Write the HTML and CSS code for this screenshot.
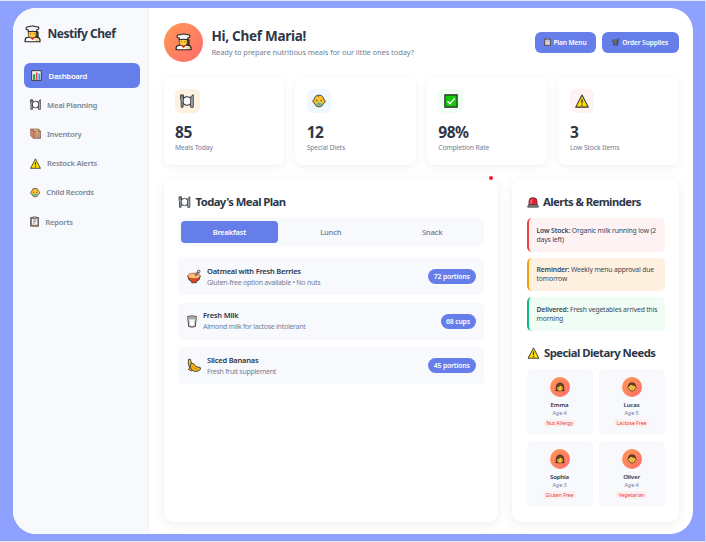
FILE: index.html
```html
<!DOCTYPE html>
<html lang="en">
<head>
<meta charset="utf-8">
<title>Nestify Chef</title>
<link rel="stylesheet" href="styles.css">
</head>
<body>
<svg class="sprite" aria-hidden="true">
  <symbol id="chef" viewBox="0 0 18 18">
    <path d="M12.500 6.500h2.500v6h-3z" fill="#3b3a39" stroke="#3b3a39"/>
    <path d="M1.200 17.200v-2.200q.3-2.200 2.800-2.400l2-.4h6l2 .4q2.600.2 2.900 2.400v2.200z" fill="#fff" stroke="#222" stroke-width="1.300"/>
    <path d="M4.500 5.500h8.500v4.700q-.6 3.200-4.200 3.200t-4.300-3.200z" fill="#ffc83d" stroke="#222" stroke-width=".7"/>
    <path d="M6.500 13h5L9 15.300z" fill="#e81224"/>
    <path d="M4.500 6.500V4.800Q1.700 4.400 2.200 2.500 3 .9 5 1.300 9-.1 13 1.300q2.700-.3 2.800 1.400-.1 1.800-2.300 2.100v1.700q-4.500-1-9 0z" fill="#f5f5f5" stroke="#222" stroke-width="1.100"/>
    <path d="M12.200 14h3v2.500h-3z" fill="#ffc83d"/>
    <path d="M6.500 8.800h1m2.700 0h1" stroke="#6b4a17" stroke-width="1"/>
  </symbol>
  <symbol id="chart" viewBox="0 0 16 16">
    <path d="M1 1h14v14H1z" fill="#f7f7f7" stroke="#333" stroke-width="1.400"/>
    <path d="M3 6h3v8H3z" fill="#16a832"/><path d="M7 3.500h2.500V14H7z" fill="#e84148"/><path d="M10.800 5h2.700v9h-2.700z" fill="#3091e8"/>
  </symbol>
  <symbol id="plate" viewBox="0 0 18 18">
    <circle cx="9" cy="9" r="5.500" fill="#fff" stroke="#333" stroke-width="1.300"/>
    <path d="M.8 1.200h3.600v5.300L3.900 8v9H1.500V8L.8 6.500zM13.800 17V8.500Q13.500 2 17 1v16z" fill="#aebcc8" stroke="#333" stroke-width="1.200"/>
    <path d="M2.600 1v5" stroke="#333" stroke-width=".9"/>
    <path d="M4.500 3.500l2 1.500m7-1.500l-2 1.500m-7 9.500l2-1.500m7 1.500l-2-1.500" stroke="#333"/>
  </symbol>
  <symbol id="box" viewBox="0 0 16 16">
    <path d="M1 1.500h11.500L15.500 5v10H5L1 11.500z" fill="#c69170" stroke="#6b5548" stroke-width="1"/>
    <path d="M1 1.500L5 5v10l-4-3.500z" fill="#d9866f"/><path d="M1 1.500L5 5h10.500M5 5v10" fill="none" stroke="#8c6349"/>
    <path d="M7 1.800L10.500 5v3" fill="none" stroke="#e8c69d" stroke-width="1.500"/>
  </symbol>
  <symbol id="warn" viewBox="0 0 16 16">
    <path d="M8 1.200L15.200 15H.8z" fill="#f9dc08" stroke="#333" stroke-width="1.200" stroke-linejoin="round"/>
    <path d="M8 6v4.700M8 12v1.500" stroke="#333" stroke-width="1.500"/>
  </symbol>
  <symbol id="baby" viewBox="0 0 16 16">
    <path d="M8 1.300q5 .2 5.400 5 1.600.2 1.600 2t-1.700 2Q12 14.800 8 14.800t-5.300-4.500Q1 10 1 8.300t1.600-2Q3 1.500 8 1.300z" fill="#ffc22e" stroke="#444" stroke-width="1.100"/>
    <path d="M7.500 1.500q-1.500 1.500.5 2" fill="none" stroke="#6b4a17" stroke-width=".8"/>
    <circle cx="5.500" cy="7.500" r=".8" fill="#333"/><circle cx="10.500" cy="7.500" r=".8" fill="#333"/>
    <rect x="5.500" y="10" width="5" height="3.200" rx="1.500" fill="#27bfd7"/>
  </symbol>
  <symbol id="clip" viewBox="0 0 14 16">
    <path d="M1 2h12v13H1z" fill="#a38671" stroke="#454040" stroke-width="1.200"/>
    <path d="M3 4h8v9H3z" fill="#f3f3f3"/><path d="M4.500 1h5v2.700h-5z" fill="#ddd" stroke="#454040"/>
    <path d="M4.500 6h5m-5 2.300h5m-5 2.300h3" stroke="#777"/>
  </symbol>
  <symbol id="check" viewBox="0 0 16 16">
    <path d="M1 1h14v14H1z" fill="#16c60c" stroke="#222" stroke-width="1.300"/>
    <path d="M4 8.200l2.800 2.800L12.200 5" fill="none" stroke="#fff" stroke-width="1.700"/>
  </symbol>
  <symbol id="cart" viewBox="0 0 16 16">
    <path d="M1 4h11l-1 6.500H2.500z" fill="#a5a7ad" stroke="#333" stroke-width="1.300"/>
    <path d="M15.500 1.500H13L10.800 12.500H3M1.500 7.200h10M5 4v6m3.500-6v6" fill="none" stroke="#333" stroke-width="1.100"/>
    <circle cx="4.500" cy="14" r="1.400" fill="#333"/><circle cx="10" cy="14" r="1.400" fill="#333"/>
  </symbol>
  <symbol id="bowl" viewBox="0 0 18 18">
    <path d="M1 8.500q.3 5.700 5 6.800V17h6v-1.700q4.700-1.100 5-6.800z" fill="#e8431f" stroke="#333" stroke-width="1.100"/>
    <ellipse cx="9" cy="8.300" rx="8" ry="3.500" fill="#ffbf78" stroke="#b04a26" stroke-width="1"/>
    <path d="M10.500 8l4-4.700" stroke="#333" stroke-width="2.600"/><path d="M10.500 8l4-4.700" stroke="#ddd" stroke-width="1.100"/>
    <circle cx="15" cy="2.600" r="1.700" fill="#ddd" stroke="#333"/>
  </symbol>
  <symbol id="milk" viewBox="0 0 14 18">
    <path d="M1 2q6-1.700 12 0l-1.300 14q-4.700 1.800-9.400 0z" fill="#ededed" stroke="#333" stroke-width="1.300" stroke-linejoin="round"/>
    <path d="M3 6h8l-.8 9H3.800z" fill="#fff" stroke="#aaa" stroke-width=".8"/><path d="M2 2.500h10l-.3 3H2.300z" fill="#a5a5a5"/>
  </symbol>
  <symbol id="banana" viewBox="0 0 18 18">
    <path d="M2 1l2.500.2q.3 2 1.300 4.800 1.500 3.500 5 5.500L10 15q-5 2-8.300-1l2-1.500Q.4 8 2 1z" fill="#ffc52e" stroke="#333" stroke-width="1.100"/>
    <path d="M5 6q4-1 6 4 3 1.500 6 1.500l.3 2.500q-3 3.500-8 2.500Q4.500 15 4 9.500z" fill="#fcb714" stroke="#333" stroke-width="1.100"/>
    <path d="M5.500 8.500q3 5 8 5.500" fill="none" stroke="#ad7300" stroke-width=".8"/>
  </symbol>
  <symbol id="siren" viewBox="0 0 18 16">
    <path d="M3 12V6q.5-5 4-5h4q3.500 0 4 5v6z" fill="#e8212c" stroke="#333" stroke-width="1.100"/>
    <path d="M6 10V6q0-2 2-2" fill="none" stroke="#ff8e91" stroke-width="1.600"/>
    <path d="M2 11.500h14l1 3.500H1z" fill="#888" stroke="#333" stroke-width="1.100"/>
  </symbol>
  <symbol id="girl" viewBox="0 0 16 16">
    <path d="M3 14H1.200q1-1.500.8-6 .3-6.500 6-6.500t6 6.500q-.2 4.500.8 6H13z" fill="#70421f" stroke="#2d241f" stroke-width="1"/>
    <path d="M3.200 8.500Q7 8 9 5q1 2.500 3.800 3.500Q12.800 14.500 8 14.500T3.200 8.500z" fill="#ffc83d" stroke="#2d241f" stroke-width=".5"/>
    <circle cx="6.200" cy="10" r=".7" fill="#333"/><circle cx="10" cy="10" r=".7" fill="#333"/>
  </symbol>
  <symbol id="boy" viewBox="0 0 16 16">
    <path d="M2.700 7Q2 1.500 8 1.500T13.300 7q1.500 0 1.500 1.600t-1.800 1.700Q12 14.800 8 14.800t-5-4.500Q1.200 10 1.200 8.500T2.700 7z" fill="#ffc83d" stroke="#2d241f"/>
    <path d="M2.500 7Q2.200 1.200 8 1.200T13.500 7l-1.300-1.500Q8 5.800 6.200 4 5 6 2.500 7z" fill="#70421f" stroke="#2d241f" stroke-width=".7"/>
    <circle cx="5.800" cy="9" r=".7" fill="#333"/><circle cx="10.200" cy="9" r=".7" fill="#333"/>
    <path d="M6.500 12.200h3" fill="none" stroke="#8b4b18" stroke-width=".8"/>
  </symbol>
</svg>

<div class="app">
  <aside class="sidebar">
    <div class="logo"><svg class="logo-icon"><use href="#chef"/></svg><span>Nestify Chef</span></div>
    <nav class="nav">
      <a class="nav-item active"><svg class="ico"><use href="#chart"/></svg><span>Dashboard</span></a>
      <a class="nav-item"><svg class="ico"><use href="#plate"/></svg><span>Meal Planning</span></a>
      <a class="nav-item"><svg class="ico"><use href="#box"/></svg><span>Inventory</span></a>
      <a class="nav-item"><svg class="ico"><use href="#warn"/></svg><span>Restock Alerts</span></a>
      <a class="nav-item"><svg class="ico mid"><use href="#baby"/></svg><span>Child Records</span></a>
      <a class="nav-item"><svg class="ico slim"><use href="#clip"/></svg><span>Reports</span></a>
    </nav>
  </aside>

  <main class="main">
    <header class="header">
      <div class="avatar"><svg><use href="#chef"/></svg></div>
      <div class="greeting">
        <h1>Hi, Chef Maria!</h1>
        <p>Ready to prepare nutritious meals for our little ones today?</p>
      </div>
      <div class="actions">
        <button class="btn plan"><svg><use href="#clip"/></svg><span>Plan Menu</span></button>
        <button class="btn order"><svg><use href="#cart"/></svg><span>Order Supplies</span></button>
      </div>
    </header>

    <section class="stats">
      <div class="stat"><div class="stat-icon orange"><svg><use href="#plate"/></svg></div><strong>85</strong><span>Meals Today</span></div>
      <div class="stat"><div class="stat-icon blue"><svg><use href="#baby"/></svg></div><strong>12</strong><span>Special Diets</span></div>
      <div class="stat"><div class="stat-icon green"><svg><use href="#check"/></svg></div><strong>98%</strong><span>Completion Rate</span></div>
      <div class="stat"><div class="stat-icon red"><svg><use href="#warn"/></svg></div><strong>3</strong><span>Low Stock Items</span></div>
    </section>

    <section class="content">
      <div class="card meals">
        <i class="dot"></i>
        <h2><svg><use href="#plate"/></svg><span>Today's Meal Plan</span></h2>
        <div class="tabs"><div class="tab active">Breakfast</div><div class="tab">Lunch</div><div class="tab">Snack</div></div>
        <div class="meal-list">
          <div class="meal"><svg><use href="#bowl"/></svg><div class="meal-text"><b>Oatmeal with Fresh Berries</b><span>Gluten-free option available • No nuts</span></div><em class="pill">72 portions</em></div>
          <div class="meal"><svg class="slim"><use href="#milk"/></svg><div class="meal-text"><b>Fresh Milk</b><span>Almond milk for lactose intolerant</span></div><em class="pill cups">68 cups</em></div>
          <div class="meal"><svg><use href="#banana"/></svg><div class="meal-text"><b>Sliced Bananas</b><span>Fresh fruit supplement</span></div><em class="pill">45 portions</em></div>
        </div>
      </div>

      <div class="card side">
        <h2 class="alerts-title"><svg><use href="#siren"/></svg><span>Alerts &amp; Reminders</span></h2>
        <div class="alerts">
          <div class="alert low"><b>Low Stock:</b> Organic milk running low (2<br>days left)</div>
          <div class="alert remind"><b>Reminder:</b> Weekly menu approval due<br>tomorrow</div>
          <div class="alert done"><b>Delivered:</b> Fresh vegetables arrived this<br>morning</div>
        </div>
        <h2 class="diet-title"><svg><use href="#warn"/></svg><span>Special Dietary Needs</span></h2>
        <div class="kids">
          <div class="kid"><div class="face"><svg><use href="#girl"/></svg></div><b>Emma</b><span>Age 4</span><em>Nut Allergy</em></div>
          <div class="kid"><div class="face"><svg><use href="#boy"/></svg></div><b>Lucas</b><span>Age 5</span><em>Lactose Free</em></div>
          <div class="kid"><div class="face"><svg><use href="#girl"/></svg></div><b>Sophia</b><span>Age 3</span><em>Gluten Free</em></div>
          <div class="kid"><div class="face"><svg><use href="#boy"/></svg></div><b>Oliver</b><span>Age 4</span><em>Vegetarian</em></div>
        </div>
      </div>
    </section>
  </main>
</div>
</body>
</html>
```
FILE: styles.css
```css
* { box-sizing: border-box; margin: 0; padding: 0; }
body {
  width: 706px; height: 542px; overflow: hidden;
  padding: 7px 12px 6px 13px;
  background: #8fa1ff;
  border-top: 1px solid #e4e6f5;
  border-bottom: 1px solid #e4e6f5;
  border-right: 1px solid #d5dbfa;
  font-family: "Noto Sans", "Open Sans", sans-serif;
  color: #2d3748;
}
svg { display: block; flex: none; }
.sprite { position: absolute; width: 0; height: 0; }
em { font-style: normal; }
span, b, em, strong, .tab, h1, p { white-space: nowrap; }

.app { display: flex; width: 680px; height: 526px; border-radius: 23px; overflow: hidden; background: #fff; }
.sidebar { width: 136px; background: #f8f9fd; border-right: 1px solid #f2f4f9; padding: 16px 8px 0 10.500px; flex: none; }
.logo { display: flex; align-items: center; height: 19px; gap: 7px; font-size: 12px; font-weight: 700; letter-spacing: -0.48px; }
.logo-icon { width: 17px; height: 18px; }
.nav { display: flex; flex-direction: column; gap: 4px; margin-top: 20px; }
.nav-item { display: flex; align-items: center; gap: 6.500px; height: 25.200px; padding-left: 6px; border-radius: 6px; font-size: 7.700px; font-weight: 600; color: #7a889c; letter-spacing: -0.25px; }
.nav-item.active { background: #667eea; color: #fff; padding-left: 7.500px; letter-spacing: -0.25px; }
.ico { width: 11px; height: 11px; }
.ico.mid { width: 10.300px; }
.ico.slim { width: 9.300px; }

.main { flex: 1; padding: 14.500px 14px 0 14.500px; }
.header { display: flex; align-items: center; height: 39.500px; }
.avatar { display: flex; align-items: center; justify-content: center; width: 39px; height: 39px; border-radius: 50%; background: linear-gradient(135deg, #ff9a56, #ff6b6b); }
.avatar svg { width: 17px; height: 18px; }
.greeting { margin-left: 9px; padding-top: 1px; }
.greeting h1 { font-size: 13.500px; line-height: 17px; font-weight: 700; letter-spacing: -0.28px; }
.greeting p { font-size: 7.500px; line-height: 12px; color: #718096; letter-spacing: -0.09px; margin-top: 1px; }
.actions { display: flex; gap: 5.500px; margin-left: auto; }
.btn { display: flex; align-items: center; justify-content: center; gap: 2px; height: 21px; border: 0; border-radius: 6px; background: #667eea; color: #fff; font: 600 6.600px "Noto Sans", sans-serif; letter-spacing: -0.1px; }
.btn svg { width: 7px; height: 8px; }
.btn.order svg { width: 8px; }
.btn.plan { width: 61px; }
.btn.order { width: 77.500px; }

.stats { display: grid; grid-template-columns: repeat(4, 1fr); gap: 11px; margin-top: 15px; }
.stat { height: 87.500px; padding: 11.500px; border-radius: 8px; background: #fff; box-shadow: 0 2px 10px rgba(0,0,0,.06); display: flex; flex-direction: column; }
.stat-icon { display: flex; align-items: center; justify-content: center; width: 24.500px; height: 24.500px; border-radius: 6px; }
.stat-icon svg { width: 14px; height: 14px; }
.orange { background: #fff1e0; }
.blue { background: #f0f8ff; }
.green { background: #f0fdf4; }
.red { background: #fef2f2; }
.stat strong { font-size: 15.500px; line-height: 20px; font-weight: 700; margin-top: 9px; letter-spacing: -0.45px; }
.stat span { font-size: 6.800px; line-height: 10px; color: #718096; letter-spacing: -0.15px; margin-top: 1px; }

.content { display: grid; grid-template-columns: 334.500px 1fr; gap: 14px; margin-top: 14.500px; }
.card { position: relative; height: 342.500px; padding: 14px 14.500px; border-radius: 9px; background: #fff; box-shadow: 0 2px 11px rgba(0,0,0,.07); }
.dot { position: absolute; left: 325px; top: -3px; width: 4px; height: 4px; border-radius: 50%; background: #ed1c24; }
h2 { display: flex; align-items: center; height: 18px; gap: 4.500px; font-size: 11.300px; line-height: 18px; font-weight: 700; letter-spacing: -0.58px; }
h2 svg { width: 13px; height: 12px; }
.tabs { display: grid; grid-template-columns: repeat(3, 1fr); gap: 4px; height: 28px; margin-top: 7px; padding: 2.700px; border-radius: 5px; background: #f8f9fd; }
.tab { display: flex; align-items: center; justify-content: center; border-radius: 4px; font-size: 7.500px; font-weight: 600; color: #7a889c; letter-spacing: -0.2px; }
.tab.active { background: #667eea; color: #fff; }
.meal-list { display: flex; flex-direction: column; gap: 7.700px; margin-top: 12px; }
.meal { display: flex; align-items: center; height: 37px; padding: 0 8px 0 8.500px; border-radius: 5px; background: #f8f9fd; }
.meal svg { width: 14px; height: 15px; margin-right: 6.500px; }
.meal svg.slim { width: 10px; }
.meal-text { display: flex; flex-direction: column; }
.meal-text b { font-size: 7.500px; line-height: 11px; font-weight: 600; letter-spacing: -0.22px; }
.meal-text span { font-size: 7px; line-height: 11px; color: #718096; letter-spacing: -0.27px; }
.pill { display: flex; align-items: center; justify-content: center; width: 47.500px; height: 15px; margin-left: auto; border-radius: 8px; background: #667eea; color: #fff; font-size: 6.800px; font-weight: 600; letter-spacing: -0.15px; }
.pill.cups { width: 35px; }

.alerts-title svg { width: 12px; height: 11px; }
.alerts { display: flex; flex-direction: column; gap: 6px; margin-top: 7px; }
.alert { height: 33.500px; padding: 7.500px 0 0 8px; border-left: 2px solid; border-radius: 5px; font-size: 6.800px; line-height: 9.200px; white-space: nowrap; letter-spacing: -0.15px; color: #3b4556; }
.alert b { font-weight: 600; }
.low { background: #fef2f2; border-left-color: #ef4444; }
.remind { background: #fff1e0; border-left-color: #f59e0b; }
.done { background: #f0fdf4; border-left-color: #10b981; }
.diet-title { margin-top: 13.500px; letter-spacing: -0.52px; }
.kids { display: grid; grid-template-columns: 1fr 1fr; gap: 6px; margin-top: 7px; }
.kid { display: flex; flex-direction: column; align-items: center; height: 66px; padding-top: 7.500px; border-radius: 6px; background: #f8f9fd; }
.face { display: flex; align-items: center; justify-content: center; width: 20px; height: 20px; border-radius: 50%; background: linear-gradient(135deg, #ff9a56, #ff6b6b); }
.face svg { width: 10px; height: 10px; }
.kid b { font-size: 6.100px; line-height: 9px; font-weight: 600; margin-top: 3.500px; letter-spacing: -0.18px; }
.kid span { font-size: 5.500px; line-height: 9px; color: #718096; letter-spacing: -0.1px; }
.kid em { font-size: 5.300px; line-height: 8px; padding: 0 2.500px; margin-top: 1px; border-radius: 2px; background: #fef0f0; color: #e53e3e; letter-spacing: -0.1px; }
```
